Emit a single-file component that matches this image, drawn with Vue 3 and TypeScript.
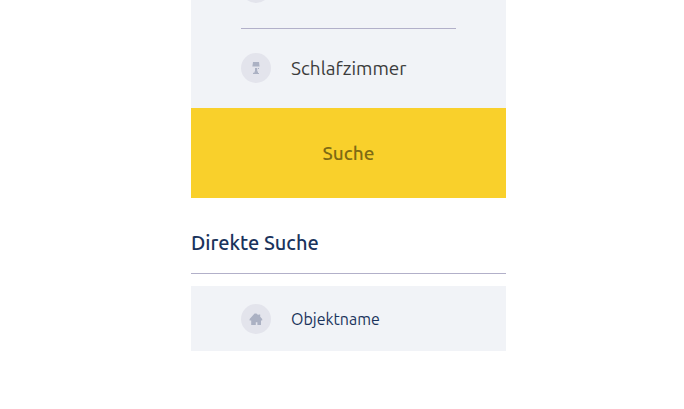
<script setup lang="ts">
import { ref } from 'vue'

const bedrooms = ref<string>('')
const objectName = ref<string>('')
const bedroomOptions: string[] = ['1', '2', '3', '4', '5']
</script>

<template>
  <main class="page">
    <form class="search" @submit.prevent>
      <div class="filters">
        <div class="row">
          <span class="badge"></span>
        </div>
        <div class="row">
          <span class="badge">
            <svg width="14" height="14" viewBox="0 0 14 14" aria-hidden="true">
              <path d="M4 1h6l.6 4.6H3.4z" />
              <path d="M6 7h2.2v3.4h.8V12h1v1H4v-1.2h1.4v-1.2H6z" />
              <path d="M9 7h1v1H9z" />
            </svg>
          </span>
          <select v-model="bedrooms" class="field" aria-label="Schlafzimmer">
            <option value="">Schlafzimmer</option>
            <option v-for="n in bedroomOptions" :key="n" :value="n">{{ n }}</option>
          </select>
        </div>
      </div>
      <button class="submit" type="submit">Suche</button>
    </form>

    <section class="direct">
      <h2 class="title">Direkte Suche</h2>
      <div class="name-box">
        <span class="badge">
          <svg width="14" height="14" viewBox="0 0 14 14" aria-hidden="true">
            <path d="M5.6 1.6h1.8l2 1.6V2.4h1.8v2.4l2 2.2v1.4H12V13H8.4v-2.8H6.8V13H2.2V8.4H.6V7z" />
          </svg>
        </span>
        <input v-model="objectName" class="field small" type="text" placeholder="Objektname" aria-label="Objektname" />
      </div>
    </section>
  </main>
</template>

<style>
body {
  background: #fff;
}
</style>

<style scoped>
.page {
  max-width: 328px;
  margin: -27px auto 0;
  padding-left: 13px;
  font-family: Ubuntu, "Noto Sans", "Open Sans", sans-serif;
}

.page,
.page * {
  box-sizing: border-box;
}

.filters {
  padding: 0 50px;
  background: #f1f3f7;
}

.row {
  display: flex;
  align-items: center;
  gap: 20px;
  padding: 24px 0 25px;
}

.row:first-child {
  padding-top: 0;
  border-bottom: 1px solid #b2b0c9;
}

.badge {
  display: flex;
  flex: none;
  align-items: center;
  justify-content: center;
  width: 30px;
  height: 30px;
  border-radius: 50%;
  background: #e3e4ec;
}

.badge svg {
  fill: #abb1c3;
}

.field {
  flex: 1;
  min-width: 0;
  height: 30px;
  margin: 0;
  padding: 0;
  border: 0;
  outline: 0;
  background: transparent;
  color: #3c3c3c;
  font-family: inherit;
  font-size: 19px;
  line-height: 30px;
  appearance: none;
}

.small {
  color: #1a335c;
  font-size: 16px;
}

.small::placeholder {
  color: #1a335c;
  opacity: 1;
}

.submit {
  display: block;
  width: 100%;
  height: 90px;
  margin: 0;
  padding: 0;
  border: 0;
  background: #f9d02b;
  color: #7e6a14;
  font-family: inherit;
  font-size: 19px;
  font-weight: 500;
  cursor: pointer;
}

.title {
  margin: 0 0 12px;
  padding: 30px 0 15px;
  border-bottom: 1px solid #b2b0c9;
  color: #1a335c;
  font-size: 20px;
  font-weight: 500;
  line-height: 30px;
}

.name-box {
  display: flex;
  align-items: center;
  gap: 20px;
  padding: 18px 50px 17px;
  background: #f1f3f7;
}
</style>
